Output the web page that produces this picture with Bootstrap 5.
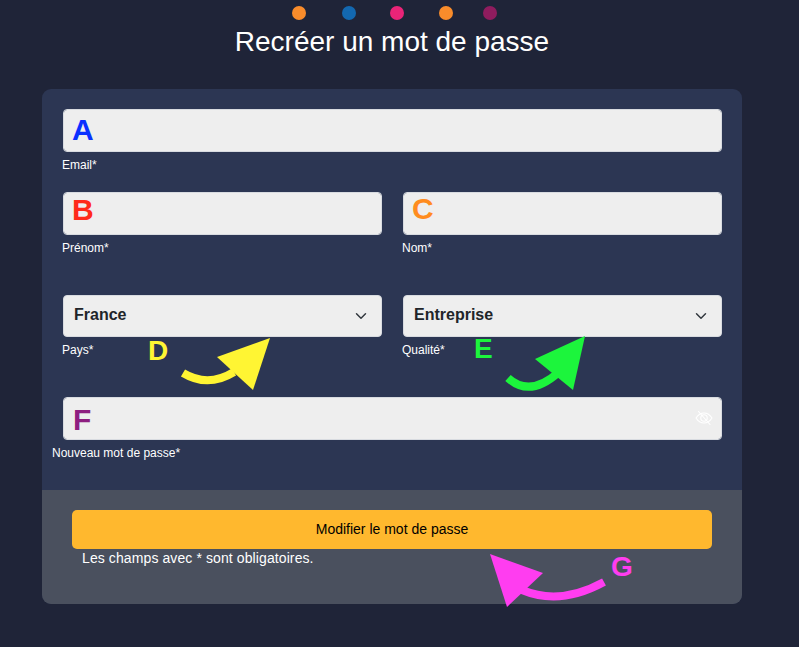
<!DOCTYPE html>
<html lang="fr">
<head>
<meta charset="utf-8">
<title>Recréer un mot de passe</title>
<link href="https://cdn.jsdelivr.net/npm/bootstrap@5.3.0/dist/css/bootstrap.min.css" rel="stylesheet">
<style>
html,body{height:100%}
body{background:#1f2438;font-family:"Liberation Sans",Arial,sans-serif;color:#fff;overflow:hidden}
.page-wrap{width:700px;margin-left:42px;position:relative}
.dots-row{height:14px;margin-top:6px;margin-left:250px;gap:36px}
.dot-item{width:14px;height:14px;border-radius:50%;flex:none}
.dot-a{background:#f98c2b}
.dot-b{background:#1368b0}
.dot-c{background:#ea2478;margin-left:-2px}
.dot-d{background:#f98c2b;margin-left:-1px}
.dot-e{background:#8f1c5e;margin-left:-6px}
.page-title{font-size:28px;font-weight:400;line-height:32px;margin:6px 0 31px;text-align:center;color:#fff}
.sheet{border-radius:9px;overflow:hidden;background:#2c3653}
.sheet-body{height:401px;padding:20px 20px 0 21px}
.sheet-foot{height:114px;background:#4a505e;padding:20px 30px 0}
.field-row{--bs-gutter-x:21px;--bs-gutter-y:0}
.field-wrap{position:relative}
.form-control.field-input,.form-select.field-input{background-color:#eee;border:1px solid #d8dbe0;border-radius:4px;height:43px;color:#212529;font-family:inherit}
.form-select.field-input{height:42px;font-weight:700;font-size:16px;padding:0 36px 2px 10px}
.field-note{display:block;font-size:12px;line-height:18px;margin:4px 0 0 -1px;color:#fff}
.note-out{margin-left:-11px}
.gap-s{margin-bottom:18px}
.gap-l{margin-bottom:38px}
.tag-letter{position:absolute;left:9px;top:2px;font-size:30px;font-weight:700;line-height:38px;pointer-events:none}
.tag-a{color:#0a30ff}
.tag-b{color:#ff2a1a;top:-1px}
.tag-c{color:#ff8c1f;top:-2px}
.tag-f{color:#8e1f80;left:10px;top:4px}
.eye-icon{position:absolute;right:9px;top:13px;width:18px;height:16px;color:#fff}
.submit-btn{display:block;width:640px;height:39px;background:#ffb82e;border:0;border-radius:5px;color:#000;font-size:14px;line-height:36px;padding:0 0 2px;text-align:center}
.foot-note{font-size:14px;line-height:18px;margin:0 0 0 10px;color:#fff;letter-spacing:.1px}
.overlay-art{position:absolute;left:-42px;top:0;width:799px;height:647px;pointer-events:none}
.call-letter{position:absolute;font-weight:700;font-size:28px;line-height:28px;pointer-events:none}
.call-d{left:106px;top:331px;color:#fff533}
.call-e{left:432px;top:329px;color:#1cf53c}
.call-g{left:569px;top:547px;color:#ff3df0}
</style>
</head>
<body>
<div class="page-wrap">
  <div class="d-flex dots-row">
    <span class="dot-item dot-a"></span>
    <span class="dot-item dot-b"></span>
    <span class="dot-item dot-c"></span>
    <span class="dot-item dot-d"></span>
    <span class="dot-item dot-e"></span>
  </div>
  <h1 class="page-title">Recréer un mot de passe</h1>
  <form class="sheet">
    <div class="sheet-body">
      <div class="gap-s">
        <div class="field-wrap">
          <input class="form-control field-input" type="email">
          <span class="tag-letter tag-a">A</span>
        </div>
        <label class="field-note">Email*</label>
      </div>
      <div class="row field-row gap-l">
        <div class="col-6">
          <div class="field-wrap">
            <input class="form-control field-input" type="text">
            <span class="tag-letter tag-b">B</span>
          </div>
          <label class="field-note">Prénom*</label>
        </div>
        <div class="col-6">
          <div class="field-wrap">
            <input class="form-control field-input" type="text">
            <span class="tag-letter tag-c">C</span>
          </div>
          <label class="field-note">Nom*</label>
        </div>
      </div>
      <div class="row field-row gap-l">
        <div class="col-6">
          <select class="form-select field-input"><option>France</option></select>
          <label class="field-note">Pays*</label>
        </div>
        <div class="col-6">
          <select class="form-select field-input"><option>Entreprise</option></select>
          <label class="field-note">Qualité*</label>
        </div>
      </div>
      <div>
        <div class="field-wrap">
          <input class="form-control field-input" type="password">
          <span class="tag-letter tag-f">F</span>
          <svg class="eye-icon" viewBox="0 0 18 16" fill="none" stroke="currentColor" stroke-width="1.1" stroke-linecap="round">
            <path d="M1 8c2.2-3.4 4.9-5 8-5s5.800 1.600 8 5c-2.200 3.400-4.900 5-8 5s-5.800-1.600-8-5z"/>
            <circle cx="9" cy="8" r="3.200"/>
            <path d="M3.500 1.500l11.500 13"/>
          </svg>
        </div>
        <label class="field-note note-out">Nouveau mot de passe*</label>
      </div>
    </div>
    <div class="sheet-foot">
      <button type="button" class="btn submit-btn">Modifier le mot de passe</button>
      <p class="foot-note">Les champs avec * sont obligatoires.</p>
    </div>
  </form>
  <svg class="overlay-art" viewBox="0 0 799 647">
    <path d="M183 367 Q208 382 234 366" fill="none" stroke="#fff533" stroke-width="8"/>
    <polygon points="270,332 217,351 253,384" fill="#fff533"/>
    <path d="M508 372 Q530 392 559 366" fill="none" stroke="#1cf53c" stroke-width="8"/>
    <polygon points="585,330 535,353 573,384" fill="#1cf53c"/>
    <path d="M604 576 Q560 600 522 584" fill="none" stroke="#ff3df0" stroke-width="8"/>
    <polygon points="490,548 543,567 507,601" fill="#ff3df0"/>
  </svg>
  <span class="call-letter call-d">D</span>
  <span class="call-letter call-e">E</span>
  <span class="call-letter call-g">G</span>
</div>
<script src="https://cdn.jsdelivr.net/npm/bootstrap@5.3.0/dist/js/bootstrap.bundle.min.js"></script>
</body>
</html>
